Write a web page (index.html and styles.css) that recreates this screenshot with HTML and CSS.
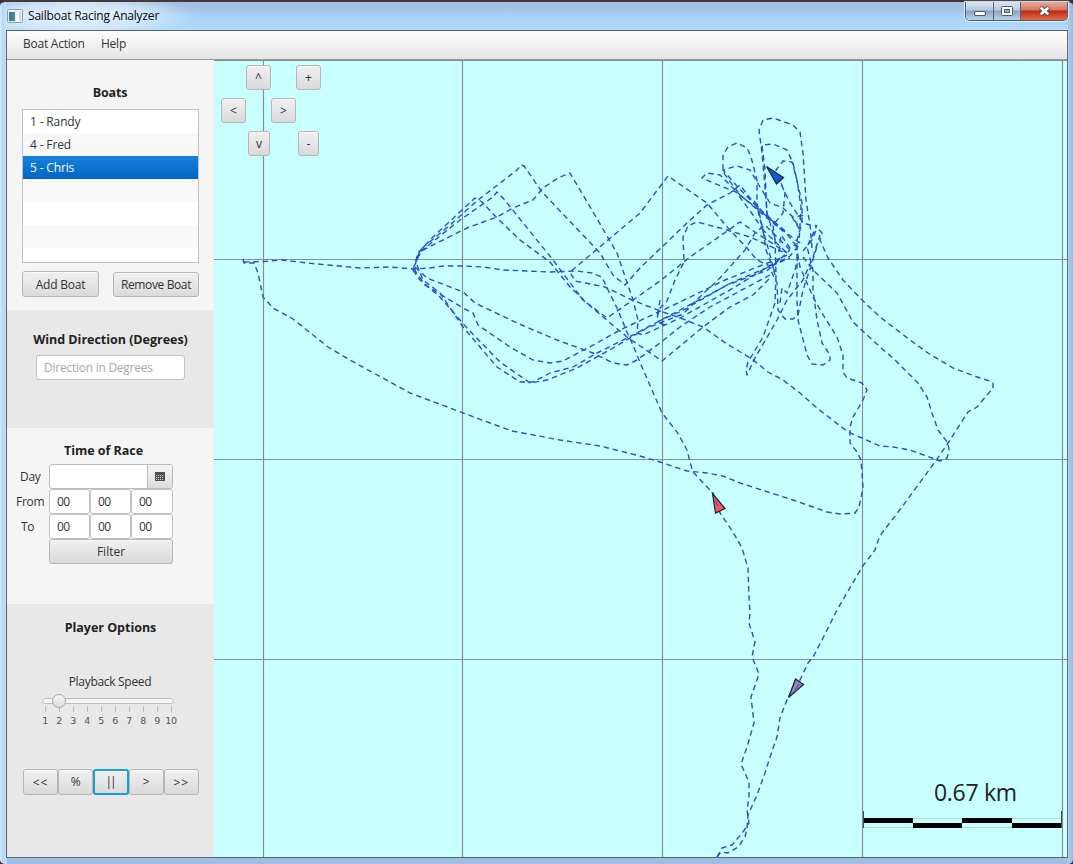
FILE: index.html
```
<!DOCTYPE html>
<html lang="en">
<head>
<meta charset="utf-8">
<title>Sailboat Racing Analyzer</title>
<link rel="stylesheet" href="styles.css">
</head>
<body>
<div class="window">
  <header class="titlebar">
    <svg class="app-icon" width="16" height="14" viewBox="0 0 16 14"><rect x=".5" y=".5" width="15" height="13" rx="1" fill="#e9eef0" stroke="#8e9ba8"/><rect x="2" y="3" width="6" height="9" fill="#3d8f78"/><rect x="2" y="3" width="3" height="9" fill="#4a769c"/><rect x="9" y="3" width="3" height="9" fill="#fff"/><rect x="12" y="3" width="2" height="9" fill="#c9dde0"/></svg>
    <h1 class="window-title">Sailboat Racing Analyzer</h1>
    <div class="controls">
      <span class="control minimize"><svg width="28" height="17"><rect x="8.5" y="9.5" width="11" height="4" rx=".5" fill="#fff" stroke="#505a68"/></svg></span>
      <span class="control maximize"><svg width="27" height="17"><rect x="7.5" y="4.500" width="11" height="9" rx="1" fill="#fff" stroke="#505a68"/><rect x="10.500" y="7.500" width="5" height="3" fill="#9bb0c9" stroke="#505a68"/></svg></span>
      <span class="control close"><svg width="47" height="17"><path d="M19.500 5.500l8 7M27.500 5.500l-8 7" stroke="#514c5a" stroke-width="4.600"/><path d="M19.800 5.800l7.400 6.400M27.200 5.800l-7.400 6.400" stroke="#fff" stroke-width="2.600"/></svg></span>
    </div>
  </header>
  <div class="client">
    <nav class="menubar"><span class="menu-boat">Boat Action</span><span class="menu-help">Help</span></nav>
    <div class="content">
      <aside class="sidebar">
        <section class="panel boats">
          <h2 class="heading w-boats">Boats</h2>
          <ul class="boat-list"><li>1 - Randy</li><li>4 - Fred</li><li class="selected">5 - Chris</li><li></li><li></li><li></li><li></li></ul>
          <div class="boat-actions"><button class="btn add">Add Boat</button><button class="btn remove">Remove Boat</button></div>
        </section>
        <section class="panel wind">
          <h2 class="heading">Wind Direction (Degrees)</h2>
          <div class="field direction">Direction in Degrees</div>
        </section>
        <section class="panel race">
          <h2 class="heading">Time of Race</h2>
          <div class="race-grid">
            <span class="label day">Day</span>
            <div class="date"><span class="date-value"></span><span class="date-button"><svg width="10" height="9" viewBox="0 0 10 9"><path d="M0 0h10v9H0z" fill="#505050"/><path fill="#d4d4d4" d="M1 3h1v1H1zM3 3h1v1H3zM5 3h1v1H5zM7 3h1v1H7zM1 5h1v1H1zM3 5h1v1H3zM5 5h1v1H5zM7 5h1v1H7zM1 7h1v1H1zM3 7h1v1H3zM5 7h1v1H5zM7 7h1v1H7z"/></svg></span></div>
            <span class="label from">From</span><span class="field time">00</span><span class="field time">00</span><span class="field time">00</span>
            <span class="label to">To</span><span class="field time">00</span><span class="field time">00</span><span class="field time">00</span>
            <button class="btn filter">Filter</button>
          </div>
        </section>
        <section class="panel player">
          <h2 class="heading">Player Options</h2>
          <p class="speed-label">Playback Speed</p>
          <div class="slider"><div class="track"><span class="thumb"></span></div>
            <div class="ticks"><span>1</span><span>2</span><span>3</span><span>4</span><span>5</span><span>6</span><span>7</span><span>8</span><span>9</span><span>10</span></div>
          </div>
          <div class="transport"><button class="btn arrows">&lt;&lt;</button><button class="btn pct">%</button><button class="btn focused">||</button><button class="btn">&gt;</button><button class="btn arrows">&gt;&gt;</button></div>
        </section>
      </aside>
      <main class="map">
        <svg class="chart" width="853" height="797" viewBox="214 60 853 797">
          <g class="grid"><path d="M263.500 60V857M462.500 60V857M662.500 60V857M862.500 60V857M1062.500 60V857M214 259.500H1067M214 459.500H1067M214 659.500H1067M214 60.500H1067"/></g>
          <g class="tracks">
            <path d="M244 262L263 261.500 282 260 307 263 328 265 360 268 390 267 413 269 430 268 443 266 463 266 483 267 503 270 527 271 550 272 577 271 592 273 602 277 608 290 617 308 627 332 632 343 642 367 652 390 662 413 677 432 687 450 690 462 693 472 707 487 713 493 720 513 733 532 742 548 748 568 749 597 750 613 749 623 755 642 752 657 759 674 751 697 754 723 747 747 741 764 749 782 749 797 747 810 749 823 743 832 732 845 722 848 717 857"/>
            <path d="M717 857L721 852 728 853 738 847 745 837 747 828 748 815 757 795 765 773 770 757 777 737 780 718 788 697 800 680 808 663 813 657 822 640 827 630 837 610 862 567 875 550 879 538 882 533 902 507 935 462 948 443 968 412 977 407 993 388 993 383 990 381 980 378 953 368 928 353 910 340 880 317 862 300 843 280 828 258 820 240 822 233 815 225"/>
            <path d="M243 259L244 263 254 263 258 273 263 297 273 308 293 319 328 347 350 360 370 371 390 382 410 393 450 408 490 423 512 431 560 440 600 446 640 456 660 462 687 471 707 473 723 476 740 483 768 492 793 500 813 507 827 512 840 514 855 513 859 507 863 488 862 473 861 460 857 452 850 443 850 427 853 417 863 400 867 390 862 383 847 378 843 372 843 355 837 337 822 313 813 297 807 283 800 267 796 245"/>
            <path d="M803 257L813 270 837 293 853 322 880 347 893 358 918 383 927 397 932 413 938 430 948 443 949 450 947 458 940 461 932 458 910 450 893 447 880 446 862 438 848 432 817 408 800 393 783 380 768 372 752 359 727 344 703 327 683 319 663 312 632 300 605 287 575 281 570 272 582 262 608 240 640 213 668 176 707 203 728 228 747 248 757 260 768 265 777 283 778 310 785 319 793 319 798 315 803 290 812 263 818 243"/>
            <path d="M413 270L418 253 433 237 462 210 475 198 482 202 497 218 520 240 550 262 570 287 587 303 607 318 633 300 660 281 690 257 713 241 740 222 755 232 787 253"/>
            <path d="M417 260L420 252 460 220 493 197 497 192 503 198 553 260 583 300 627 337 662 361 703 327 730 307 753 295 770 278"/>
            <path d="M415 265L420 250 450 225 478 200 517 170 521 165 524 166 542 192 600 253 613 275 625 285 640 268 687 223 707 205 730 193 740 185 757 207 784 230 797 247"/>
            <path d="M417 258L423 250 467 228 497 217 513 208 533 200 543 188 558 178 570 173 593 212 617 253 633 300 638 320 637 333 643 335 680 318 735 287 787 255"/>
            <path d="M415 267L427 278 463 292 475 303 517 323 557 340 593 353 613 363 627 365 637 360 660 343 680 327 710 307 770 275"/>
            <path d="M414 269L425 285 463 308 473 313 478 325 510 347 533 360 550 363 563 361 597 343 620 330 680 302 725 280 780 258"/>
            <path d="M417 265L423 280 440 293 463 327 497 367 520 382 533 382 550 373 573 367 597 353 633 335 680 310 733 282 790 258"/>
            <path d="M413 270L420 280 440 297 467 328 500 362 523 378 530 383 547 380 577 368 613 348 647 328 683 314 692 305 727 285 768 270 790 250"/>
            <path d="M660 300L657 318 660 308 667 301 675 280 684 262 683 237 688 226 697 222 720 228 750 237 783 252M665 325L657 322 688 308 720 278 745 250 755 233 765 225 790 250"/>
            <path d="M812 248L810 225 806 200 803 153 800 132 793 125 773 118 763 120 759 130 762 153 765 187 767 213 775 240 776 275"/>
            <path d="M767 216L765 170 762 145 773 144 787 150 793 163 802 203 802 223 797 240 797 300 798 320 807 355 812 364 823 365 830 360 830 355 822 343 817 320 813 290 813 270 807 247 817 225"/>
            <path d="M775 240L773 225 783 213 785 193 776 170 783 161 792 162 797 180 801 207 799 243M777 177L780 182 790 203 803 223 810 225"/>
            <path d="M774 222L740 195 723 172 723 155 728 147 737 143 747 148 751 157 757 180 757 203 763 230 766 250 776 275 775 303 763 337 748 362 746 370 747 375 755 358 777 320 787 300 803 280 813 257 820 235"/>
            <path d="M786 252L763 230 757 207 736 185 723 170 737 166 750 170 760 187 770 203 783 208 793 217 806 215"/>
            <path d="M800 243L773 223 740 195 720 175 707 173 702 178 723 187 736 192 753 215 763 230 770 255 775 275"/>
            <path d="M779 252L781 235 790 248 798 243M803 251L812 240 817 228M772 266L790 256 801 243M780 303L782 288 787 293 795 270 798 257M798 225L792 217 800 230M754 201L764 214 784 232"/>
          </g>
          <g class="markers"><path fill="#0a5fd0" d="M766.500 166.500L783.500 177.500 776.500 184z"/><path fill="#f65563" d="M712.500 493.500L725 508.500 715.500 513z"/><path fill="#9183b5" d="M788.500 697.500L795.500 679 803.500 684.500z"/></g>
          <path class="marker-lines" d="M715 500l3 6M795 690l4-6"/>
          <g class="scale"><path class="scale-outline" d="M863 818.500H1062M863 827.500H1062"/><path d="M863 818h50v5h-50zM913 823h49v5h-49zM962 818h50v5h-50zM1012 823h50v5h-50z"/><path class="scale-end" d="M863.500 811V828M1061.500 811V828"/></g>
        </svg>
        <span class="scale-text">0.67 km</span>
        <button class="btn nav up">^</button><button class="btn nav zoom-in">+</button><button class="btn nav left">&lt;</button><button class="btn nav right">&gt;</button><button class="btn nav down">v</button><button class="btn nav zoom-out">-</button>
      </main>
    </div>
  </div>
</div>
</body>
</html>
```
FILE: styles.css
```
* { box-sizing: border-box; }
body { margin: 0; overflow: hidden; background: #3a302f; font: 12px/16px "Open Sans", "Noto Sans", sans-serif; color: #333; }
h1, h2, p, ul { margin: 0; padding: 0; }
.window { width: 1073px; height: 864px; padding: 0 5px 6px 6px; border-top: 2px solid #443839; border-radius: 6px 6px 5px 5px; background: linear-gradient(90deg, #d9ebfb 0, #b4d6f8 3px, #c8e2f9 6px, transparent 7px, transparent 1067px, #b4cbe6 1068px, #9bb9df 1073px), linear-gradient(#bcd3eb 0, #b4daf9 28px, #d8eafb 100px, #e1f0ff 230px, #b4d8ff 236px, #b4d8ff 590px, #9fbfe2 620px, #a0bee1 100%); }
.titlebar { display: flex; height: 28px; padding: 0 0 0 1px; background: radial-gradient(ellipse 120px 22px at 70px 14px, #e6f3fe 0, #d6ebfdcc 60%, transparent 100%), linear-gradient(#a5bddc, #a4c8ed 9px, #a8d5fb 16px, #b4dafa); }
.app-icon { margin-top: 7px; }
.window-title { width: 140px; margin: 6px 0 0 5px; color: #050505; font-size: 12px; font-weight: 400; line-height: 16px; letter-spacing: -.19px; white-space: nowrap; }
.controls { display: flex; width: 103px; height: 19px; margin-left: auto; border: 1px solid #4f6078; border-top: 0; border-radius: 0 0 5px 5px; overflow: hidden; box-shadow: 0 0 1px 1px #dbeaf8; }
.control { height: 18px; border-right: 1px solid #53667e; background: linear-gradient(#dbe6f2, #b8c8dc 8px, #8ba3c1 9px, #bad2e9); }
.control svg { display: block; }
.minimize { width: 28px; }
.maximize { width: 27px; }
.close { width: 47px; border: 0; background: linear-gradient(#e5ac9e, #d47760 8px, #bd2b13 9px, #df6d43); }
.client { height: 828px; border: 1px solid #58636f; border-right-color: #657383; }
.menubar { display: flex; height: 29px; padding: 5px 16px; border-bottom: 1px solid #999; background: linear-gradient(#fdfdfd, #e5e5e5); letter-spacing: -.24px; }
.menu-boat { width: 78px; }
.content { display: flex; height: 797px; }
.sidebar { width: 207px; flex: none; }
.panel { background: #f5f5f5; }
.heading { font-size: 12.5px; line-height: 16px; font-weight: 700; text-align: center; letter-spacing: -.02px; color: #222; }
.boats { height: 250px; padding: 25px 15px 0; }
.w-boats { padding-right: 1px; letter-spacing: -.2px; }
.boat-list { height: 154px; margin-top: 8px; border: 1px solid #c2c2c2; overflow: hidden; list-style: none; }
.boat-list li { height: 23px; padding: 4px 7px; background: #fff; letter-spacing: -.15px; }
.boat-list li:nth-child(even) { background: #f8f8f8; }
.boat-list .selected { background: linear-gradient(#1682dc, #0063c4); color: #fff; }
.btn { display: block; margin: 0; padding: 0; border: 1px solid #b6b6b6; border-radius: 3px; background: linear-gradient(#f0f0f0, #dadada); box-shadow: inset 0 1px #f8f8f8; font: inherit; color: #333; }
.boat-actions { display: flex; justify-content: space-between; align-items: flex-end; height: 34px; }
.add { width: 77px; height: 26px; padding-top: 1px; letter-spacing: -.2px; }
.remove { width: 86px; height: 25px; letter-spacing: -.37px; }
.wind { height: 118px; padding-top: 22px; background: #e8e8e8; }
.field { display: block; border: 1px solid #c1c1c1; border-radius: 3px; background: #fff; }
.direction { width: 149px; height: 25px; margin: 7px 0 0 29px; padding: 4px 7px; color: #aaa; letter-spacing: -.25px; }
.race { height: 176px; padding-top: 15px; }
.race .heading { padding-right: 14px; }
.race-grid { display: grid; grid-template: 25px 25px 25px 25px / 42px 41px 41px 42px; margin-top: 5px; }
.label { padding-top: 5px; letter-spacing: -.3px; }
.day { padding-left: 13px; }
.from { padding-left: 9px; }
.to { padding-left: 14px; }
.date { grid-column: 2 / 5; display: flex; border: 1px solid #bbb; border-radius: 3px; overflow: hidden; background: #fff; }
.date-value { flex: 1; }
.date-button { width: 25px; padding: 7px; border-left: 1px solid #bbb; background: linear-gradient(#f4f4f4, #dedede); }
.date-button svg { display: block; }
.time { padding: 4px 7px; letter-spacing: -.5px; }
.filter { grid-column: 2 / 5; }
.player { height: 253px; padding-top: 16px; background: #e8e8e8; }
.speed-label { margin-top: 38px; padding-right: 1px; text-align: center; letter-spacing: -.3px; }
.slider { width: 132px; margin: 8px 0 0 35px; }
.track { height: 6px; border: 1px solid #bebebe; border-radius: 3px; background: #f5f5f5; }
.thumb { display: block; width: 14px; height: 14px; margin: -5px 0 0 9px; border: 1px solid #aaa; border-radius: 50%; background: linear-gradient(#f5f5f5, #dedede); position: relative; }
.ticks { display: grid; grid-template-columns: repeat(10, 14px); margin: 2px 0 0 -4px; font: 9.5px/12px "DejaVu Sans", sans-serif; letter-spacing: -.3px; text-align: center; color: #555; }
.ticks span::before { content: ""; display: block; width: 1px; height: 6px; margin: 0 auto 3px; background: #bbb; }
.transport { display: grid; grid-template-columns: repeat(5, 35.2px); height: 26px; margin: 42px 0 0 16px; }
.transport .btn { height: 26px; }
.transport .arrows { padding-top: 1px; letter-spacing: 1px; }
.transport .focused { border: 2px solid #18a0d5; letter-spacing: -2px; padding-right: 2px; }
.map { position: relative; width: 853px; height: 797px; background: #c8ffff; }
.chart { display: block; }
.grid { fill: none; stroke: #898f90; stroke-width: 1.15; }
.tracks { fill: none; stroke: #2352c8; stroke-width: 1.4; stroke-linejoin: round; stroke-dasharray: 5.5 3.8; }
.markers { stroke: #182331; stroke-width: 1.2; }
.marker-lines { fill: none; stroke: #2860c8; }
.scale-outline { stroke: #aedada; }
.scale-end { stroke: #394b4b; }
.scale-text { position: absolute; top: 716px; left: 720px; font-size: 23px; line-height: 32px; letter-spacing: -.3px; white-space: nowrap; color: #222; }
.nav { position: absolute; width: 25px; height: 25px; }
.up { left: 32px; top: 5px; }
.zoom-in { left: 82px; top: 5px; }
.left { left: 7px; top: 38px; }
.right { left: 57px; top: 38px; }
.down { left: 34px; top: 71px; width: 22px; }
.zoom-out { left: 84px; top: 71px; width: 21px; }
```
